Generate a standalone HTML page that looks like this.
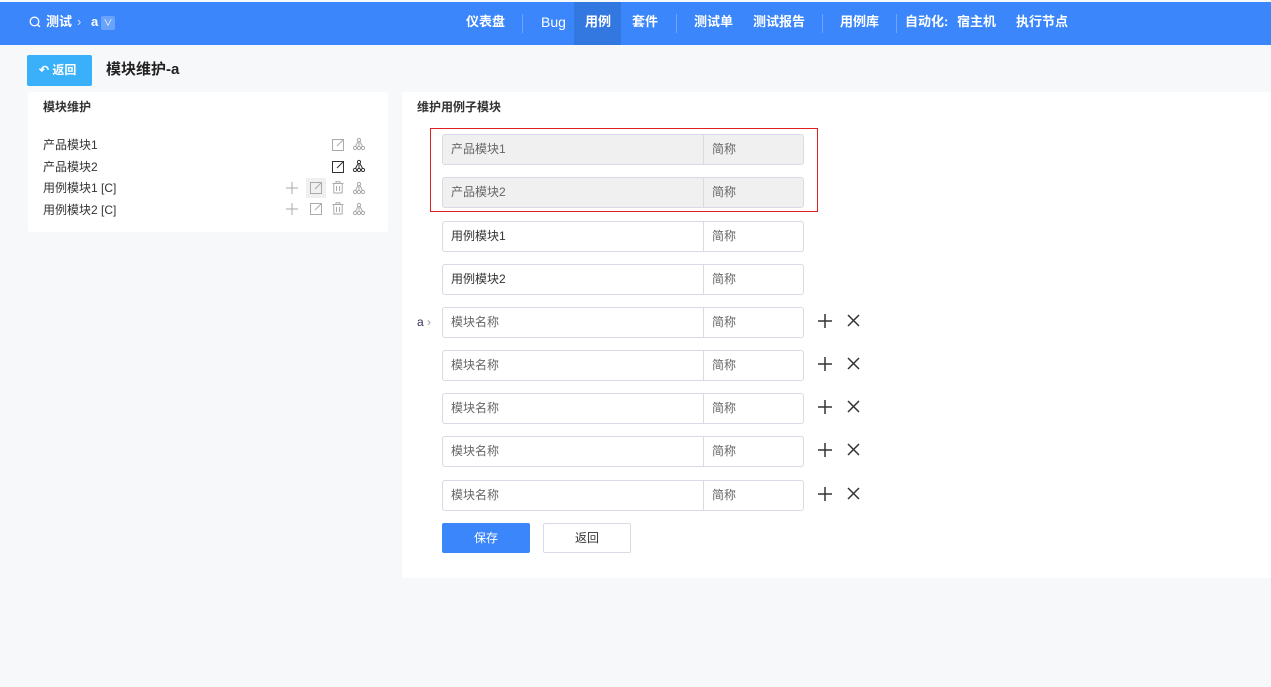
<!DOCTYPE html><html><head><meta charset="utf-8"><style>
*{box-sizing:border-box;margin:0;padding:0}
body{width:1271px;height:687px;background:#f7f8fa;font-family:"Liberation Sans","Noto Sans CJK SC",sans-serif;position:relative;overflow:hidden;color:#333}
.top{position:absolute;left:0;top:2px;width:1271px;height:43px;background:#3b86fb;color:#fff;font-size:13px}
.top span{position:absolute;top:0;line-height:40px;font-weight:bold}
.sep{position:absolute;top:12px;width:1px;height:19px;background:#6fa6fc}
.abs{position:absolute}
.inp{position:absolute;left:442px;width:362px;height:31px;border:1px solid #d8dae6;border-radius:3px;background:#fff;font-size:12px;color:#666;line-height:29px}
.inp .a{position:absolute;left:8px;top:0}
.inp .b{position:absolute;left:260px;top:0;height:29px;border-left:1px solid #d8dae6;padding:0 8px}
.g{background:#f0f0f0}
.ic{position:absolute;width:16px;height:16px}
.li{position:absolute;left:43px;font-size:12px;color:#333;line-height:14px}
</style></head><body>
<div class="top">
<svg class="abs" style="left:29px;top:14px" width="12" height="12" viewBox="0 0 12 12"><circle cx="5.5" cy="5.5" r="4.3" fill="none" stroke="#fff" stroke-width="1.3"/><path d="M8.5 8.5L11 11" stroke="#fff" stroke-width="1.3"/></svg>
<span style="left:46px">测试</span><span style="left:77px;font-weight:normal;color:#cfe0fe">›</span><span style="left:91px">a</span>
<div class="abs" style="left:101px;top:14px;width:14px;height:14px;background:#6aa3fc;border-radius:2px;font-size:9px;text-align:center;line-height:14px">&#8744;</div>
<div class="abs" style="left:574px;top:0;width:47px;height:43px;background:#3278e0"></div>
<span style="left:466px">仪表盘</span><div class="sep" style="left:522px"></div>
<span style="left:541px;font-weight:normal;font-size:14px">Bug</span>
<span style="left:585px">用例</span><span style="left:632px">套件</span><div class="sep" style="left:676px"></div>
<span style="left:694px">测试单</span><span style="left:753px">测试报告</span><div class="sep" style="left:822px"></div>
<span style="left:840px">用例库</span><div class="sep" style="left:896px"></div>
<span style="left:905px">自动化:</span><span style="left:957px">宿主机</span><span style="left:1016px">执行节点</span>
</div>
<div class="abs" style="left:27px;top:55px;width:65px;height:31px;background:#3ab0fb;border-radius:2px;color:#fff;font-size:12px;font-weight:bold;line-height:30px;padding-left:12px">&#8630; 返回</div>
<div class="abs" style="left:106px;top:60px;font-size:15px;font-weight:bold;color:#222;line-height:20px">模块维护-a</div>
<div class="abs" style="left:28px;top:92px;width:360px;height:140px;background:#fff;border-radius:3px"></div>
<div class="abs" style="left:43px;top:100px;font-size:12px;font-weight:bold;line-height:14px">模块维护</div>
<div class="li" style="top:138px">产品模块1</div><div class="li" style="top:160px">产品模块2</div>
<div class="li" style="top:181px">用例模块1 [C]</div><div class="li" style="top:203px">用例模块2 [C]</div>
<svg class="abs" style="left:280px;top:136px" width="95" height="84" viewBox="0 0 95 84">
<defs>
<g id="ed"><rect x="0.5" y="1.5" width="11" height="11" fill="none" stroke="currentColor"/><path d="M5 8L11.5 1.5" stroke="currentColor"/></g>
<g id="tr"><circle cx="6" cy="2" r="1.6" fill="none" stroke="currentColor"/><circle cx="2" cy="10" r="1.6" fill="none" stroke="currentColor"/><circle cx="6" cy="10" r="1.6" fill="none" stroke="currentColor"/><circle cx="10" cy="10" r="1.6" fill="none" stroke="currentColor"/><path d="M6 3.6V8.4M5 3.6L2.5 8.4M7 3.6L9.5 8.4" stroke="currentColor"/></g>
<g id="mv"><path d="M6 0V12M0 6H12" stroke="currentColor"/></g>
<g id="dl"><path d="M0.5 2.5H11.5M4 2.5V0.8H8V2.5M1.8 2.5V12H10.2V2.5M4.5 5V10M7.5 5V10" fill="none" stroke="currentColor"/></g>
</defs>
<use href="#ed" x="52" y="2" color="#aaa"/><use href="#tr" x="73" y="2" color="#aaa"/>
<use href="#ed" x="52" y="24" color="#333"/><use href="#tr" x="73" y="24" color="#333"/>
<rect x="26" y="42" width="20" height="20" fill="#f0f0f0"/>
<use href="#mv" x="6" y="46" color="#aaa"/><use href="#ed" x="30" y="45" color="#aaa"/><use href="#dl" x="52" y="45" color="#aaa"/><use href="#tr" x="73" y="46" color="#aaa"/>
<use href="#mv" x="6" y="67" color="#aaa"/><use href="#ed" x="30" y="66" color="#aaa"/><use href="#dl" x="52" y="66" color="#aaa"/><use href="#tr" x="73" y="67" color="#aaa"/>
</svg>
<div class="abs" style="left:402px;top:92px;width:869px;height:486px;background:#fff"></div>
<div class="abs" style="left:417px;top:100px;font-size:12px;font-weight:bold;line-height:14px">维护用例子模块</div>
<div class="abs" style="left:430px;top:128px;width:388px;height:84px;border:1.5px solid #e02020"></div>
<div class="inp g" style="top:134px"><span class="a">产品模块1</span><span class="b">简称</span></div>
<div class="inp g" style="top:177px"><span class="a">产品模块2</span><span class="b">简称</span></div>
<div class="inp" style="top:221px"><span class="a" style="color:#333">用例模块1</span><span class="b">简称</span></div>
<div class="inp" style="top:264px"><span class="a" style="color:#333">用例模块2</span><span class="b">简称</span></div>
<div class="abs" style="left:417px;top:315px;font-size:12px;color:#335;line-height:14px">a <span style="color:#999">›</span></div>
<div class="inp" style="top:307px"><span class="a">模块名称</span><span class="b">简称</span></div>
<div class="inp" style="top:350px"><span class="a">模块名称</span><span class="b">简称</span></div>
<div class="inp" style="top:393px"><span class="a">模块名称</span><span class="b">简称</span></div>
<div class="inp" style="top:436px"><span class="a">模块名称</span><span class="b">简称</span></div>
<div class="inp" style="top:480px"><span class="a">模块名称</span><span class="b">简称</span></div>
<svg class="abs" style="left:817px;top:313px" width="44" height="190" viewBox="0 0 44 190">
<g stroke="#333" stroke-width="1.5" fill="none">
<path d="M8 1V15M1 8H15M31 2L42 13M42 2L31 13"/>
<path d="M8 44V58M1 51H15M31 45L42 56M42 45L31 56"/>
<path d="M8 87V101M1 94H15M31 88L42 99M42 88L31 99"/>
<path d="M8 130V144M1 137H15M31 131L42 142M42 131L31 142"/>
<path d="M8 174V188M1 181H15M31 175L42 186M42 175L31 186"/>
</g></svg>
<div class="abs" style="left:442px;top:523px;width:88px;height:30px;background:#3b86fb;border-radius:2px;color:#fff;font-size:12px;text-align:center;line-height:30px">保存</div>
<div class="abs" style="left:543px;top:523px;width:88px;height:30px;border:1px solid #d8dae6;border-radius:2px;font-size:12px;text-align:center;line-height:28px">返回</div>
</body></html>
